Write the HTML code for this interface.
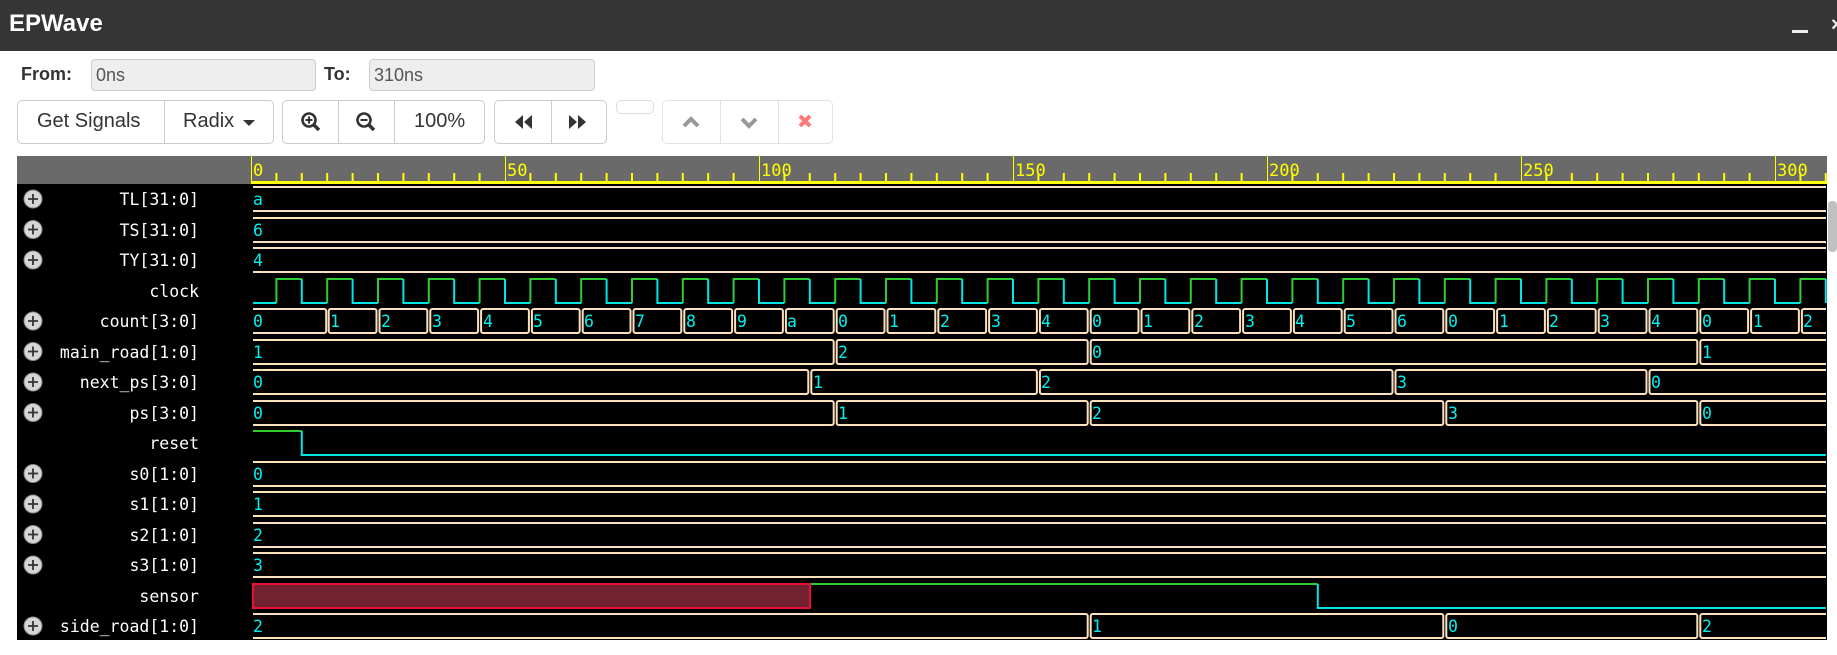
<!DOCTYPE html>
<html><head><meta charset="utf-8">
<style>
*{box-sizing:border-box;margin:0;padding:0}
body{width:1837px;height:655px;overflow:hidden;background:#fff;font-family:"Liberation Sans",sans-serif;position:relative}
.title{position:absolute;left:0;top:0;width:1837px;height:51px;background:#353535}
.title b{position:absolute;left:9px;top:10px;color:#fff;font-size:24px;font-weight:bold}
.lbl{position:absolute;font-weight:bold;font-size:18px;color:#333;top:64px}
.inp{position:absolute;top:59px;height:32px;background:#eee;border:1px solid #ccc;border-radius:4px;color:#555;font-size:18px;padding:5px 0 0 4px}
.grp{position:absolute;top:100px;height:44px;border:1px solid #ccc;border-radius:5px;background:#fff}
.grp div{position:absolute;top:0;height:42px;border-left:1px solid #ccc}
.btxt{position:absolute;top:110px;font-size:20px;color:#333}
svg{position:absolute;left:0;top:0}
</style></head><body>
<div class="title"><b>EPWave</b>
<div style="position:absolute;left:1792px;top:30px;width:16px;height:3px;background:#eee"></div>
<div style="position:absolute;left:1831px;top:14px;color:#eee;font-size:20px;font-weight:bold">×</div>
</div>
<div class="lbl" style="left:21px">From:</div>
<div class="inp" style="left:91px;width:225px">0ns</div>
<div class="lbl" style="left:324px">To:</div>
<div class="inp" style="left:369px;width:226px">310ns</div>

<div class="grp" style="left:17px;width:257px"><div style="left:146px"></div></div>
<div class="btxt" style="left:37px">Get Signals</div>
<div class="btxt" style="left:183px">Radix</div>
<div class="grp" style="left:282px;width:203px"><div style="left:55px"></div><div style="left:111px"></div></div>
<div class="btxt" style="left:414px">100%</div>
<div class="grp" style="left:494px;width:113px"><div style="left:56px"></div></div>
<div class="grp" style="left:616px;width:38px;height:14px;border-color:#ddd"></div>
<div class="grp" style="left:662px;width:171px;border-color:#e2e2e2"><div style="left:57px;border-color:#e2e2e2"></div><div style="left:115px;border-color:#e2e2e2"></div></div>

<svg width="1837" height="655">
<defs><clipPath id="wc"><rect x="253" y="184" width="1573" height="460"/></clipPath></defs>
<path d="M243 120h12l-6 6z" fill="#333"/>
<g stroke="#333" fill="none" stroke-width="2.6">
<circle cx="309" cy="120" r="6.5"/><path d="M314 125l5 5" stroke-width="3.5"/><path d="M305.5 120h7M309 116.5v7" stroke-width="2"/>
<circle cx="364" cy="120" r="6.5"/><path d="M369 125l5 5" stroke-width="3.5"/><path d="M360.5 120h7" stroke-width="2"/>
</g>
<path d="M523 115l-8 7 8 7zM532 115l-8 7 8 7z" fill="#333"/>
<path d="M569 115l8 7-8 7zM578 115l8 7-8 7z" fill="#333"/>
<path d="M684 126l7-7 7 7" stroke="#999" stroke-width="4" fill="none"/>
<path d="M742 119l7 7 7-7" stroke="#999" stroke-width="4" fill="none"/>
<path d="M800 116l10 10M810 116l-10 10" stroke="#f77" stroke-width="4" fill="none"/>

<rect x="17" y="156" width="1810" height="28" fill="#6a6a6a"/>
<rect x="17" y="184" width="1810" height="456" fill="#000"/>
<rect x="251" y="181" width="1576" height="3" fill="#ff0"/>
<g fill="#ff0">
<rect x="251" y="156" width="1" height="28"/><rect x="505" y="156" width="1" height="28"/><rect x="759" y="156" width="1" height="28"/><rect x="1013" y="156" width="1" height="28"/><rect x="1267" y="156" width="1" height="28"/><rect x="1521" y="156" width="1" height="28"/><rect x="1775" y="156" width="1" height="28"/>
</g>
<g transform="translate(251,0) scale(5.08,1)">
<path vector-effect="non-scaling-stroke" stroke="#ff0" stroke-width="2" fill="none" d="M5 173V181M10 173V181M15 173V181M20 173V181M25 173V181M30 173V181M35 173V181M40 173V181M45 173V181M55 173V181M60 173V181M65 173V181M70 173V181M75 173V181M80 173V181M85 173V181M90 173V181M95 173V181M105 173V181M110 173V181M115 173V181M120 173V181M125 173V181M130 173V181M135 173V181M140 173V181M145 173V181M155 173V181M160 173V181M165 173V181M170 173V181M175 173V181M180 173V181M185 173V181M190 173V181M195 173V181M205 173V181M210 173V181M215 173V181M220 173V181M225 173V181M230 173V181M235 173V181M240 173V181M245 173V181M255 173V181M260 173V181M265 173V181M270 173V181M275 173V181M280 173V181M285 173V181M290 173V181M295 173V181M305 173V181M310 173V181"/>
<path vector-effect="non-scaling-stroke" stroke="#2ecc2e" stroke-width="2" fill="none" d="M5 303V279H10M15 303V279H20M25 303V279H30M35 303V279H40M45 303V279H50M55 303V279H60M65 303V279H70M75 303V279H80M85 303V279H90M95 303V279H100M105 303V279H110M115 303V279H120M125 303V279H130M135 303V279H140M145 303V279H150M155 303V279H160M165 303V279H170M175 303V279H180M185 303V279H190M195 303V279H200M205 303V279H210M215 303V279H220M225 303V279H230M235 303V279H240M245 303V279H250M255 303V279H260M265 303V279H270M275 303V279H280M285 303V279H290M295 303V279H300M305 303V279H310"/>
<path vector-effect="non-scaling-stroke" stroke="#00e5e5" stroke-width="2" fill="none" d="M0.4 303H5M10 279V303H15M20 279V303H25M30 279V303H35M40 279V303H45M50 279V303H55M60 279V303H65M70 279V303H75M80 279V303H85M90 279V303H95M100 279V303H105M110 279V303H115M120 279V303H125M130 279V303H135M140 279V303H145M150 279V303H155M160 279V303H165M170 279V303H175M180 279V303H185M190 279V303H195M200 279V303H205M210 279V303H215M220 279V303H225M230 279V303H235M240 279V303H245M250 279V303H255M260 279V303H265M270 279V303H275M280 279V303H285M290 279V303H295M300 279V303H305M310 279V303"/>
<path vector-effect="non-scaling-stroke" stroke="#2ecc2e" stroke-width="2" fill="none" d="M0.4 431H10M110 584H210"/>
<path vector-effect="non-scaling-stroke" stroke="#00e5e5" stroke-width="2" fill="none" d="M10 431V455H310M210 584V608H310"/>
</g>
<rect x="253" y="584" width="557" height="24" fill="#72222f" stroke="#e8103a" stroke-width="2"/>

<g fill="none" stroke="#fde0bd" stroke-width="2" clip-path="url(#wc)">
<rect x="240" y="187" width="1600" height="24" rx="2"/>
<rect x="240" y="218" width="1600" height="24" rx="2"/>
<rect x="240" y="248" width="1600" height="24" rx="2"/>
<rect x="240" y="462" width="1600" height="24" rx="2"/>
<rect x="240" y="492" width="1600" height="24" rx="2"/>
<rect x="240" y="523" width="1600" height="24" rx="2"/>
<rect x="240" y="553" width="1600" height="24" rx="2"/>
<rect x="240" y="309" width="86.2" height="24" rx="2"/>
<rect x="328.7" y="309" width="47.8" height="24" rx="2"/><rect x="379.5" y="309" width="47.8" height="24" rx="2"/><rect x="430.3" y="309" width="47.8" height="24" rx="2"/><rect x="481.1" y="309" width="47.8" height="24" rx="2"/><rect x="531.9" y="309" width="47.8" height="24" rx="2"/><rect x="582.7" y="309" width="47.8" height="24" rx="2"/><rect x="633.5" y="309" width="47.8" height="24" rx="2"/><rect x="684.3" y="309" width="47.8" height="24" rx="2"/><rect x="735.1" y="309" width="47.8" height="24" rx="2"/><rect x="785.9" y="309" width="47.8" height="24" rx="2"/><rect x="836.7" y="309" width="47.8" height="24" rx="2"/><rect x="887.5" y="309" width="47.8" height="24" rx="2"/><rect x="938.3" y="309" width="47.8" height="24" rx="2"/><rect x="989.1" y="309" width="47.8" height="24" rx="2"/><rect x="1039.9" y="309" width="47.8" height="24" rx="2"/><rect x="1090.7" y="309" width="47.8" height="24" rx="2"/><rect x="1141.5" y="309" width="47.8" height="24" rx="2"/><rect x="1192.3" y="309" width="47.8" height="24" rx="2"/><rect x="1243.1" y="309" width="47.8" height="24" rx="2"/><rect x="1293.9" y="309" width="47.8" height="24" rx="2"/><rect x="1344.7" y="309" width="47.8" height="24" rx="2"/><rect x="1395.5" y="309" width="47.8" height="24" rx="2"/><rect x="1446.3" y="309" width="47.8" height="24" rx="2"/><rect x="1497.1" y="309" width="47.8" height="24" rx="2"/><rect x="1547.9" y="309" width="47.8" height="24" rx="2"/><rect x="1598.7" y="309" width="47.8" height="24" rx="2"/><rect x="1649.5" y="309" width="47.8" height="24" rx="2"/><rect x="1700.3" y="309" width="47.8" height="24" rx="2"/><rect x="1751.1" y="309" width="47.8" height="24" rx="2"/><rect x="1801.9" y="309" width="40" height="24" rx="2"/>
<rect x="240" y="340" width="593.7" height="24" rx="2"/><rect x="836.7" y="340" width="251" height="24" rx="2"/><rect x="1090.7" y="340" width="606.6" height="24" rx="2"/><rect x="1700.3" y="340" width="140" height="24" rx="2"/>
<rect x="240" y="370" width="568.3" height="24" rx="2"/><rect x="811.3" y="370" width="225.6" height="24" rx="2"/><rect x="1039.9" y="370" width="352.6" height="24" rx="2"/><rect x="1395.5" y="370" width="251" height="24" rx="2"/><rect x="1649.5" y="370" width="190" height="24" rx="2"/>
<rect x="240" y="401" width="593.7" height="24" rx="2"/><rect x="836.7" y="401" width="251" height="24" rx="2"/><rect x="1090.7" y="401" width="352.6" height="24" rx="2"/><rect x="1446.3" y="401" width="251" height="24" rx="2"/><rect x="1700.3" y="401" width="140" height="24" rx="2"/>
<rect x="240" y="614" width="847.7" height="24" rx="2"/><rect x="1090.7" y="614" width="352.6" height="24" rx="2"/><rect x="1446.3" y="614" width="251" height="24" rx="2"/><rect x="1700.3" y="614" width="140" height="24" rx="2"/>
</g>

<g font-family="'DejaVu Sans Mono','Liberation Mono',monospace" font-size="17" fill="#ff0">
<text x="253" y="176">0</text><text x="507" y="176">50</text><text x="761" y="176">100</text><text x="1015" y="176">150</text><text x="1269" y="176">200</text><text x="1523" y="176">250</text><text x="1777" y="176">300</text>
</g>

<g font-family="'DejaVu Sans Mono','Liberation Mono',monospace" font-size="16.5" fill="#00f0f0">
<text x="253" y="205">a</text><text x="253" y="236">6</text><text x="253" y="266">4</text>
<text x="253" y="480">0</text><text x="253" y="510">1</text><text x="253" y="541">2</text><text x="253" y="571">3</text>
<text y="327"><tspan x="253">0</tspan><tspan x="330">1</tspan><tspan x="381">2</tspan><tspan x="432">3</tspan><tspan x="483">4</tspan><tspan x="533">5</tspan><tspan x="584">6</tspan><tspan x="635">7</tspan><tspan x="686">8</tspan><tspan x="737">9</tspan><tspan x="787">a</tspan><tspan x="838">0</tspan><tspan x="889">1</tspan><tspan x="940">2</tspan><tspan x="991">3</tspan><tspan x="1041">4</tspan><tspan x="1092">0</tspan><tspan x="1143">1</tspan><tspan x="1194">2</tspan><tspan x="1245">3</tspan><tspan x="1295">4</tspan><tspan x="1346">5</tspan><tspan x="1397">6</tspan><tspan x="1448">0</tspan><tspan x="1499">1</tspan><tspan x="1549">2</tspan><tspan x="1600">3</tspan><tspan x="1651">4</tspan><tspan x="1702">0</tspan><tspan x="1753">1</tspan><tspan x="1803">2</tspan></text>
<text y="358"><tspan x="253">1</tspan><tspan x="838">2</tspan><tspan x="1092">0</tspan><tspan x="1702">1</tspan></text>
<text y="388"><tspan x="253">0</tspan><tspan x="813">1</tspan><tspan x="1041">2</tspan><tspan x="1397">3</tspan><tspan x="1651">0</tspan></text>
<text y="419"><tspan x="253">0</tspan><tspan x="838">1</tspan><tspan x="1092">2</tspan><tspan x="1448">3</tspan><tspan x="1702">0</tspan></text>
<text y="632"><tspan x="253">2</tspan><tspan x="1092">1</tspan><tspan x="1448">0</tspan><tspan x="1702">2</tspan></text>
</g>

<g font-family="'DejaVu Sans Mono','Liberation Mono',monospace" font-size="16.5" fill="#fff" text-anchor="end">
<text x="199" y="205">TL[31:0]</text><text x="199" y="236">TS[31:0]</text><text x="199" y="266">TY[31:0]</text><text x="199" y="297">clock</text><text x="199" y="327">count[3:0]</text><text x="199" y="358">main_road[1:0]</text><text x="199" y="388">next_ps[3:0]</text><text x="199" y="419">ps[3:0]</text><text x="199" y="449">reset</text><text x="199" y="480">s0[1:0]</text><text x="199" y="510">s1[1:0]</text><text x="199" y="541">s2[1:0]</text><text x="199" y="571">s3[1:0]</text><text x="199" y="602">sensor</text><text x="199" y="632">side_road[1:0]</text>
</g>
<g fill="#d6d6d6" stroke="#888" stroke-width="1">
<circle cx="33" cy="199" r="9"/><circle cx="33" cy="229.5" r="9"/><circle cx="33" cy="260" r="9"/><circle cx="33" cy="321" r="9"/><circle cx="33" cy="351.5" r="9"/><circle cx="33" cy="382" r="9"/><circle cx="33" cy="412.5" r="9"/><circle cx="33" cy="473.5" r="9"/><circle cx="33" cy="504" r="9"/><circle cx="33" cy="534.5" r="9"/><circle cx="33" cy="565" r="9"/><circle cx="33" cy="626" r="9"/>
</g>
<g stroke="#333" stroke-width="1.8">
<path d="M28 199h10M33 194v10M28 229.5h10M33 224.5v10M28 260h10M33 255v10M28 321h10M33 316v10M28 351.5h10M33 346.5v10M28 382h10M33 377v10M28 412.5h10M33 407.5v10M28 473.5h10M33 468.5v10M28 504h10M33 499v10M28 534.5h10M33 529.5v10M28 565h10M33 560v10M28 626h10M33 621v10"/>
</g>
<rect x="1828" y="201" width="9" height="51" rx="4" fill="#c1c1c1"/>
</svg>
</body></html>
